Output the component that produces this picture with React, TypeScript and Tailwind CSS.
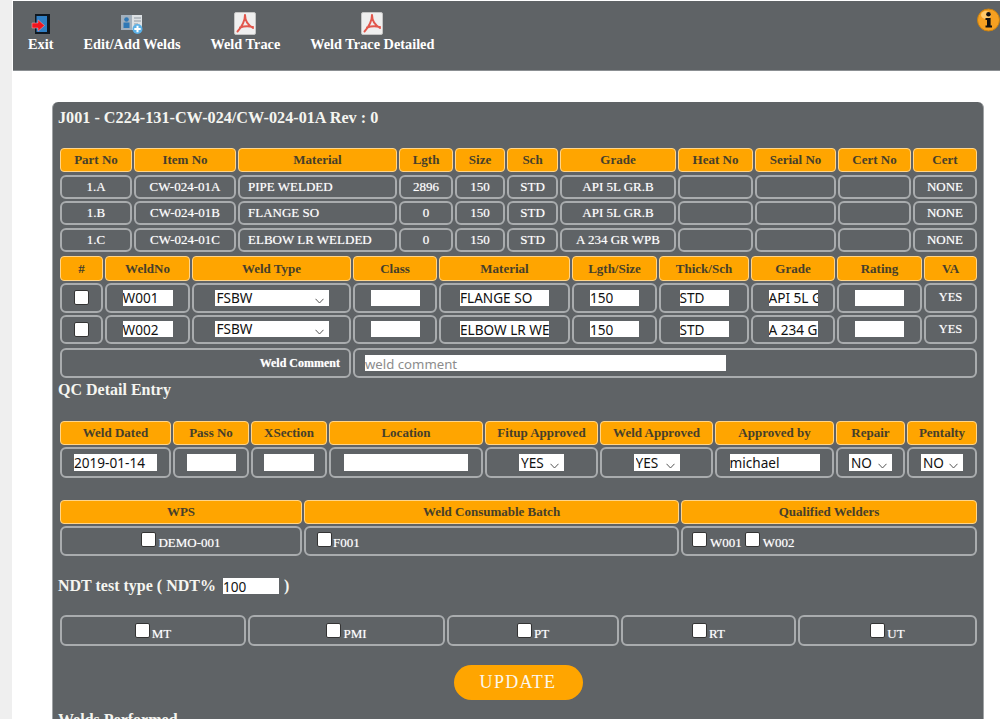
import type { ReactNode } from "react";

const Head = ({ children }: { children: ReactNode }) => (
  <div className="flex items-center justify-center rounded-[4px] border border-[#ffd58a] bg-[#ffa500] text-[13px] font-bold text-[#463f2b]">
    {children}
  </div>
);

const Cell = ({
  children,
  className = "",
  align = "items-center",
  size = "text-[13px]",
}: {
  children?: ReactNode;
  className?: string;
  align?: string;
  size?: string;
}) => (
  <div
    className={`flex justify-center rounded-[6px] border-2 border-[#a9acae] text-white [text-shadow:0_0_1px_rgba(255,255,255,0.55)] ${size} ${align} ${className}`}
  >
    {children}
  </div>
);

const Field = ({ value, className = "", placeholder }: { value?: string; className?: string; placeholder?: string }) => (
  <input
    defaultValue={value}
    placeholder={placeholder}
    className={`h-[16px] bg-white font-['Noto_Sans',sans-serif] text-[13.6px] leading-none font-normal text-[#111] outline-none [text-shadow:none] placeholder:text-[13.2px] placeholder:text-[#8c8c8c] ${className}`}
  />
);

const Pick = ({ value, className = "", tall }: { value: string; className?: string; tall?: boolean }) => (
  <span className={`relative inline-block ${tall ? "h-[17px]" : "h-[16px]"} ${className}`}>
    <select
      defaultValue={value}
      className="block h-full w-full appearance-none bg-white pl-[2px] font-['Noto_Sans',sans-serif] text-[13.6px] leading-none text-[#111] outline-none [text-shadow:none]"
    >
      <option>{value}</option>
    </select>
    <svg className="absolute bottom-[2px] right-[5px]" width="9" height="6" viewBox="0 0 9 6" fill="none">
      <path d="M0.5 0.8 L4.5 5 L8.5 0.8" stroke="#555" strokeWidth="1" />
    </svg>
  </span>
);

const Box = () => (
  <input type="checkbox" className="h-[15px] w-[15px] appearance-none rounded-[2px] border border-[#333] bg-white" />
);

const ExitIcon = () => (
  <svg width="20" height="22" viewBox="0 0 20 22">
    <rect x="4" y="1" width="15" height="20" fill="#0f1720" />
    <rect x="5.5" y="3" width="10.5" height="16" fill="#2f7fc4" />
    <path d="M1 10 H7 V6.8 L13.5 12.5 L7 18.2 V15 H1 Z" fill="#f0141e" stroke="#f7b0b0" strokeWidth="0.5" />
  </svg>
);

const WeldsIcon = () => (
  <svg width="24" height="22" viewBox="0 0 24 22">
    <rect x="1" y="2" width="11" height="15" fill="#a3b0bc" />
    <rect x="12" y="2" width="10" height="15" fill="#dde1e4" />
    <circle cx="6.5" cy="6.5" r="2.3" fill="#2f78b5" />
    <rect x="3.5" y="9.5" width="6" height="5.5" fill="#2f78b5" />
    <path d="M14 5 H21 M14 8 H21 M14 11 H18" stroke="#8f99a2" strokeWidth="1" />
    <circle cx="17.5" cy="16" r="5" fill="#5bb0e6" />
    <path d="M17.5 12.8 V19.2 M14.3 16 H20.7" stroke="#fff" strokeWidth="2" />
  </svg>
);

const PdfIcon = () => (
  <svg width="22" height="23" viewBox="0 0 22 23">
    <rect x="0.5" y="0.5" width="21" height="22" rx="1.5" fill="#efefef" stroke="#c4c4c4" />
    <path
      d="M11 3 C11.2 8 8 15 3.5 19.5 M11 3 C11 8 14 13 19 16 M6 15.5 C10 14 14.5 13.8 19 15"
      fill="none"
      stroke="#e2574c"
      strokeWidth="2"
      strokeLinecap="round"
    />
  </svg>
);

const InfoIcon = () => (
  <svg width="23" height="24" viewBox="0 0 23 24" className="block">
    <circle cx="11.5" cy="12" r="11" fill="#f6a021" stroke="#c9810f" />
    <ellipse cx="9" cy="7" rx="5" ry="4" fill="#ffc96b" />
    <circle cx="11.5" cy="6.3" r="2.3" fill="#111" />
    <path d="M8.5 10 H13.6 V17.5 H15 V19.5 H8.5 V17.5 H10 V12 H8.5 Z" fill="#111" />
  </svg>
);

const tools = [
  { label: "Exit", icon: <ExitIcon /> },
  { label: "Edit/Add Welds", icon: <WeldsIcon /> },
  { label: "Weld Trace", icon: <PdfIcon /> },
  { label: "Weld Trace Detailed", icon: <PdfIcon /> },
];

const partHeads = ["Part No", "Item No", "Material", "Lgth", "Size", "Sch", "Grade", "Heat No", "Serial No", "Cert No", "Cert"];
const parts = [
  ["1.A", "CW-024-01A", "PIPE WELDED", "2896", "150", "STD", "API 5L GR.B", "", "", "", "NONE"],
  ["1.B", "CW-024-01B", "FLANGE SO", "0", "150", "STD", "API 5L GR.B", "", "", "", "NONE"],
  ["1.C", "CW-024-01C", "ELBOW LR WELDED", "0", "150", "STD", "A 234 GR WPB", "", "", "", "NONE"],
];
const weldHeads = ["#", "WeldNo", "Weld Type", "Class", "Material", "Lgth/Size", "Thick/Sch", "Grade", "Rating", "VA"];
const welds = [
  { no: "W001", material: "FLANGE SO", grade: "API 5L GR.B" },
  { no: "W002", material: "ELBOW LR WELDED", grade: "A 234 GR WPB" },
];
const qcHeads = ["Weld Dated", "Pass No", "XSection", "Location", "Fitup Approved", "Weld Approved", "Approved by", "Repair", "Pentalty"];
const ndt = ["MT", "PMI", "PT", "RT", "UT"];

export default function App() {
  return (
    <div className="flex h-[719px] overflow-hidden bg-white font-['Liberation_Serif','Times_New_Roman',serif]">
      <div className="w-[12px] shrink-0 bg-[#efefef]" />
      <div className="min-w-0 flex-1">
        <div className="mt-[1px] ml-[1px] flex h-[70px] border-b border-[#8b8f92] bg-[#5f6366]">
          <div className="flex gap-[30px] pt-[11px] pl-[15px]">
            {tools.map((t) => (
              <div key={t.label} className="flex flex-col items-center">
                <div className="flex h-[23px] items-center">{t.icon}</div>
                <span className="mt-[1px] text-[14.3px] leading-[16px] font-bold text-white">{t.label}</span>
              </div>
            ))}
          </div>
          <div className="mt-[7px] ml-auto">
            <InfoIcon />
          </div>
        </div>

        <div className="mt-[31px] ml-[40px] w-[932px] rounded-t-[6px] border-x border-[#a0a3a5] bg-[#5f6366] pt-[6px] pb-[40px] pl-[5px]">
          <h1 className="text-[16.2px] leading-[20px] font-bold text-[#f5f5f0]">J001 - C224-131-CW-024/CW-024-01A Rev : 0</h1>

          <div className="mt-[19.5px] ml-[2px] grid grid-cols-[72px_102px_159px_54px_50px_51px_116px_75px_81px_73px_64px] grid-rows-[24.5px_24px_24px_24px] gap-x-[2px] gap-y-[2.5px]">
            {partHeads.map((h) => (
              <Head key={h}>{h}</Head>
            ))}
            {parts.map((row) =>
              row.map((v, i) => (
                <Cell key={row[0] + i} className={i === 2 ? "justify-start pl-[8px]" : ""}>
                  {v}
                </Cell>
              )),
            )}
          </div>

          <div className="mt-[4.5px] ml-[2px] grid grid-cols-[43px_85px_159px_84px_131px_85px_90px_84px_85px_53px] grid-rows-[25px_29.5px_29.5px] gap-x-[2px] gap-y-[2px]">
            {weldHeads.map((h) => (
              <Head key={h}>{h}</Head>
            ))}
            {welds.map((w) => (
              <div key={w.no} className="contents">
                <Cell>
                  <Box />
                </Cell>
                <Cell>
                  <Field value={w.no} className="w-[50px]" />
                </Cell>
                <Cell>
                  <Pick value="FSBW" className="w-[114px]" />
                </Cell>
                <Cell>
                  <Field className="w-[49px]" />
                </Cell>
                <Cell>
                  <Field value={w.material} className="w-[89px]" />
                </Cell>
                <Cell>
                  <Field value="150" className="w-[49px]" />
                </Cell>
                <Cell>
                  <Field value="STD" className="w-[49px]" />
                </Cell>
                <Cell>
                  <Field value={w.grade} className="w-[49px]" />
                </Cell>
                <Cell>
                  <Field className="w-[49px]" />
                </Cell>
                <Cell size="text-[12.5px]">YES</Cell>
              </div>
            ))}
          </div>

          <div className="mt-[4px] ml-[2px] grid h-[30px] grid-cols-[291px_624px] gap-x-[2px]">
            <Cell size="text-[12px]" className="justify-end pr-[9px] font-bold">
              Weld Comment
            </Cell>
            <Cell className="justify-start pl-[10px]">
              <Field placeholder="weld comment" className="w-[361px]" />
            </Cell>
          </div>

          <h2 className="mt-[2px] text-[16px] leading-[20px] font-bold text-[#f5f5f0]">QC Detail Entry</h2>

          <div className="mt-[21px] ml-[2px] grid grid-cols-[111px_76px_76px_154px_113px_113px_119px_69px_70px] grid-rows-[24px_31px] gap-x-[2px] gap-y-[2px]">
            {qcHeads.map((h) => (
              <Head key={h}>{h}</Head>
            ))}
            <Cell>
              <Field value="2019-01-14" className="h-[17px] w-[83px]" />
            </Cell>
            <Cell>
              <Field className="h-[17px] w-[49px]" />
            </Cell>
            <Cell>
              <Field className="h-[17px] w-[50px]" />
            </Cell>
            <Cell>
              <Field className="h-[17px] w-[124px]" />
            </Cell>
            <Cell>
              <Pick tall value="YES" className="w-[45px]" />
            </Cell>
            <Cell>
              <Pick tall value="YES" className="w-[46px]" />
            </Cell>
            <Cell>
              <Field value="michael" className="h-[17px] w-[90px]" />
            </Cell>
            <Cell>
              <Pick tall value="NO" className="w-[43px]" />
            </Cell>
            <Cell>
              <Pick tall value="NO" className="w-[42px]" />
            </Cell>
          </div>

          <div className="mt-[22px] ml-[2px] grid grid-cols-[242px_375px_296px] grid-rows-[24px_30px] gap-x-[2px] gap-y-[2px]">
            <Head>WPS</Head>
            <Head>Weld Consumable Batch</Head>
            <Head>Qualified Welders</Head>
            <Cell align="items-baseline" className="gap-x-[2px] pt-[4px]">
              <Box />
              <span>DEMO-001</span>
            </Cell>
            <Cell align="items-baseline" className="justify-start gap-x-[1px] pt-[4px] pl-[11px]">
              <Box />
              <span>F001</span>
            </Cell>
            <Cell align="items-baseline" className="justify-start gap-x-[3px] pt-[4px] pl-[9px]">
              <Box />
              <span>W001</span>
              <Box />
              <span>W002</span>
            </Cell>
          </div>

          <div className="mt-[20px] flex h-[20px] items-center gap-x-[5px] text-[16px] font-bold text-[#f5f5f0]">
            <span>NDT test type ( NDT%</span>
            <Field value="100" className="ml-[2px] w-[56px]" />
            <span>)</span>
          </div>

          <div className="mt-[19px] ml-[2px] grid h-[31px] grid-cols-[186px_197px_172px_175px_179px] gap-x-[2px]">
            {ndt.map((n) => (
              <Cell key={n} align="items-baseline" className="gap-x-[2px] pt-[6px]">
                <Box />
                <span>{n}</span>
              </Cell>
            ))}
          </div>

          <div className="mt-[19px] flex justify-center pr-[5px]">
            <button className="h-[35px] w-[129px] rounded-full bg-[#ffa500] text-[18px] tracking-[1.3px] text-[#fbf7ee]">UPDATE</button>
          </div>

          <h2 className="mt-[9.5px] text-[16px] leading-[20px] font-bold text-[#f5f5f0]">Welds Performed</h2>
        </div>
      </div>
    </div>
  );
}
